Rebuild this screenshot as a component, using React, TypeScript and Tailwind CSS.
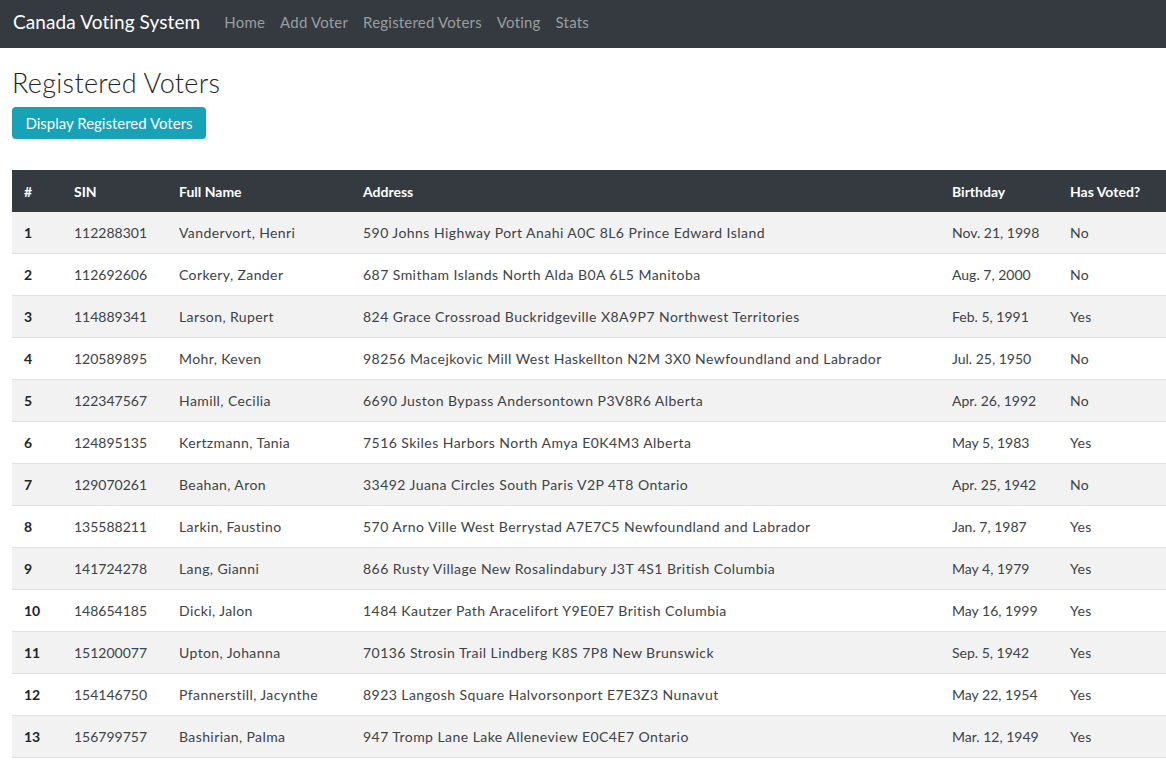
const voters = [
  ['1', '112288301', 'Vandervort, Henri', '590 Johns Highway Port Anahi A0C 8L6 Prince Edward Island', 'Nov. 21, 1998', 'No'],
  ['2', '112692606', 'Corkery, Zander', '687 Smitham Islands North Alda B0A 6L5 Manitoba', 'Aug. 7, 2000', 'No'],
  ['3', '114889341', 'Larson, Rupert', '824 Grace Crossroad Buckridgeville X8A9P7 Northwest Territories', 'Feb. 5, 1991', 'Yes'],
  ['4', '120589895', 'Mohr, Keven', '98256 Macejkovic Mill West Haskellton N2M 3X0 Newfoundland and Labrador', 'Jul. 25, 1950', 'No'],
  ['5', '122347567', 'Hamill, Cecilia', '6690 Juston Bypass Andersontown P3V8R6 Alberta', 'Apr. 26, 1992', 'No'],
  ['6', '124895135', 'Kertzmann, Tania', '7516 Skiles Harbors North Amya E0K4M3 Alberta', 'May 5, 1983', 'Yes'],
  ['7', '129070261', 'Beahan, Aron', '33492 Juana Circles South Paris V2P 4T8 Ontario', 'Apr. 25, 1942', 'No'],
  ['8', '135588211', 'Larkin, Faustino', '570 Arno Ville West Berrystad A7E7C5 Newfoundland and Labrador', 'Jan. 7, 1987', 'Yes'],
  ['9', '141724278', 'Lang, Gianni', '866 Rusty Village New Rosalindabury J3T 4S1 British Columbia', 'May 4, 1979', 'Yes'],
  ['10', '148654185', 'Dicki, Jalon', '1484 Kautzer Path Aracelifort Y9E0E7 British Columbia', 'May 16, 1999', 'Yes'],
  ['11', '151200077', 'Upton, Johanna', '70136 Strosin Trail Lindberg K8S 7P8 New Brunswick', 'Sep. 5, 1942', 'Yes'],
  ['12', '154146750', 'Pfannerstill, Jacynthe', '8923 Langosh Square Halvorsonport E7E3Z3 Nunavut', 'May 22, 1954', 'Yes'],
  ['13', '156799757', 'Bashirian, Palma', '947 Tromp Lane Lake Alleneview E0C4E7 Ontario', 'Mar. 12, 1949', 'Yes'],
];

const cols = ['w-[50px]', 'w-[105px]', 'w-[184px]', 'w-[589px]', 'w-[118px]', 'flex-1'];
const track = ['', '', 'tracking-[0.4px]', 'tracking-[0.45px]', '', 'tracking-[0.3px]'];
const heads = ['#', 'SIN', 'Full Name', 'Address', 'Birthday', 'Has Voted?'];

export default function App() {
  return (
    <div className="min-h-[771px] bg-white font-['Lato',sans-serif] text-[#212529]">
      <nav className="h-12 bg-[#343a40] flex items-center px-[13px] pb-[3px]">
        <span className="text-white text-[19px] tracking-[0.1px] mr-[24px]">Canada Voting System</span>
        <div className="flex gap-[15px] text-[15px] tracking-[0.2px] text-[#9a9da0]">
          <span>Home</span>
          <span>Add Voter</span>
          <span>Registered Voters</span>
          <span>Voting</span>
          <span>Stats</span>
        </div>
      </nav>

      <main className="pl-3">
        <h2 className="text-[27px] font-light tracking-[0.3px] text-[#212529] pt-[16px] leading-[38px]">Registered Voters</h2>
        <button className="mt-[5px] h-8 w-[194px] bg-[#17a2b8] text-white text-[15px] rounded-[4px]">
          Display Registered Voters
        </button>

        <div className="mt-[31px] text-[14px]">
          <div className="h-[42px] bg-[#343a40] text-white font-bold flex items-center">
            {heads.map((h, i) => (
              <div key={h} className={`${cols[i]} px-3`}>{h}</div>
            ))}
          </div>
          {voters.map((v, r) => (
            <div
              key={v[0]}
              className={`h-[42px] flex items-center border-b border-[#dee2e6] ${r % 2 === 0 ? 'bg-[#f2f2f2]' : 'bg-white'}`}
            >
              {v.map((c, i) => (
                <div key={i} className={`${cols[i]} ${track[i]} px-3 whitespace-nowrap ${i === 0 ? 'font-bold' : 'text-[#3d4247]'}`}>
                  {c}
                </div>
              ))}
            </div>
          ))}
        </div>
      </main>
    </div>
  );
}
